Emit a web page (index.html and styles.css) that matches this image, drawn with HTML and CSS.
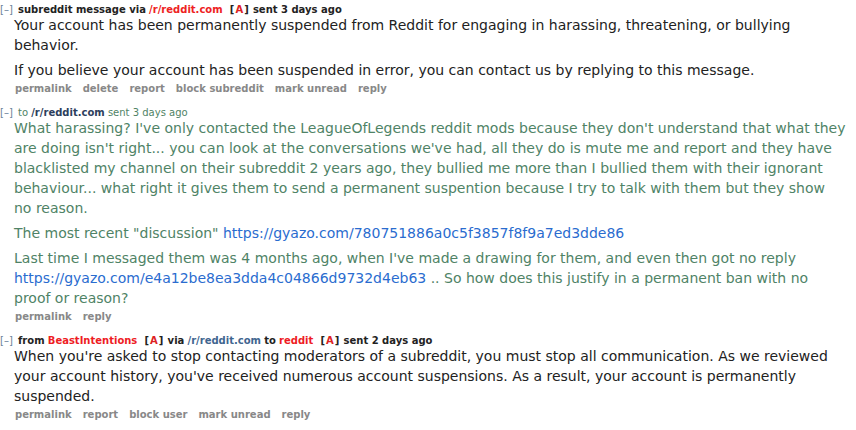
FILE: index.html
```html
<!DOCTYPE html>
<html>
<head>
<meta charset="utf-8">
<link rel="stylesheet" href="styles.css">
</head>
<body>
<div class="inbox">
  <div class="message">
    <p class="tagline"><span class="expand">[–]</span><span class="meta"><b>subreddit message via</b> <a class="sr admin">/r/reddit.com</a> <span class="tag">[<span class="a">A</span>]</span> <b>sent 3 days ago</b></span></p>
    <div class="md">
      <p>Your account has been permanently suspended from Reddit for engaging in harassing, threatening, or bullying<br>behavior.</p>
      <p>If you believe your account has been suspended in error, you can contact us by replying to this message.</p>
    </div>
    <ul class="buttons"><li>permalink</li><li>delete</li><li>report</li><li>block subreddit</li><li>mark unread</li><li>reply</li></ul>
  </div>

  <div class="message sent">
    <p class="tagline"><span class="expand">[–]</span><span class="meta">to <a class="sr dark">/r/reddit.com</a> sent 3 days ago</span></p>
    <div class="md">
      <p>What harassing? I've only contacted the LeagueOfLegends reddit mods because they don't understand that what they<br>are doing isn't right... you can look at the conversations we've had, all they do is mute me and report and they have<br>blacklisted my channel on their subreddit 2 years ago, they bullied me more than I bullied them with their ignorant<br>behaviour... what right it gives them to send a permanent suspention because I try to talk with them but they show<br>no reason.</p>
      <p>The most recent "discussion" <a class="link">https://gyazo.com/780751886a0c5f3857f8f9a7ed3dde86</a></p>
      <p>Last time I messaged them was 4 months ago, when I've made a drawing for them, and even then got no reply<br><a class="link">https://gyazo.com/e4a12be8ea3dda4c04866d9732d4eb63</a> .. So how does this justify in a permanent ban with no<br>proof or reason?</p>
    </div>
    <ul class="buttons"><li>permalink</li><li>reply</li></ul>
  </div>

  <div class="message">
    <p class="tagline"><span class="expand">[–]</span><span class="meta"><b>from</b> <a class="user">BeastIntentions</a> <span class="tag">[<span class="a">A</span>]</span> <b>via</b> <a class="sr">/r/reddit.com</a> <b>to</b> <a class="user">reddit</a> <span class="tag">[<span class="a">A</span>]</span> <b>sent 2 days ago</b></span></p>
    <div class="md">
      <p>When you're asked to stop contacting moderators of a subreddit, you must stop all communication. As we reviewed<br>your account history, you've received numerous account suspensions. As a result, your account is permanently<br>suspended.</p>
    </div>
    <ul class="buttons"><li>permalink</li><li>report</li><li>block user</li><li>mark unread</li><li>reply</li></ul>
  </div>
</div>
</body>
</html>
```

FILE: styles.css
```css
html, body {
  margin: 0;
  padding: 0;
  background: #ffffff;
}

body {
  font-family: "DejaVu Sans", Verdana, sans-serif;
  color: #222222;
}

.inbox {
  width: 856px;
  display: flex;
  flex-direction: column;
  gap: 13px;
  padding-top: 5px;
}

.message {
  display: flex;
  flex-direction: column;
}

.tagline {
  margin: 0;
  display: flex;
  font-size: 10px;
  line-height: 10px;
  height: 10px;
  white-space: nowrap;
}

.expand {
  width: 18px;
  color: #6a7f99;
  font-weight: normal;
}

.meta b {
  font-weight: bold;
  color: #222;
}

.tagline a {
  font-weight: bold;
  text-decoration: none;
}

.sr {
  color: #3f6690;
}

.sr.admin {
  color: #ee2222;
}

.sr.dark {
  color: #2c3e5c;
}

.user {
  color: #ee1c24;
}

.tag {
  font-weight: bold;
  color: #222;
  margin-left: 4px;
  letter-spacing: 1px;
}

.tag .a {
  color: #dd2222;
}

.md {
  padding-left: 14px;
  font-size: 14px;
  line-height: 20px;
  white-space: nowrap;
}

.md p {
  margin: 0;
}

.md p + p {
  margin-top: 5px;
}

.sent .meta,
.sent .md {
  color: #4f8366;
}

.link {
  color: #2a6ccf;
  text-decoration: none;
}

.buttons {
  list-style: none;
  margin: 3px 0 0;
  padding: 0 0 0 15px;
  display: flex;
  gap: 11px;
  font-size: 10px;
  line-height: 12px;
  font-weight: bold;
  color: #888888;
}
```
